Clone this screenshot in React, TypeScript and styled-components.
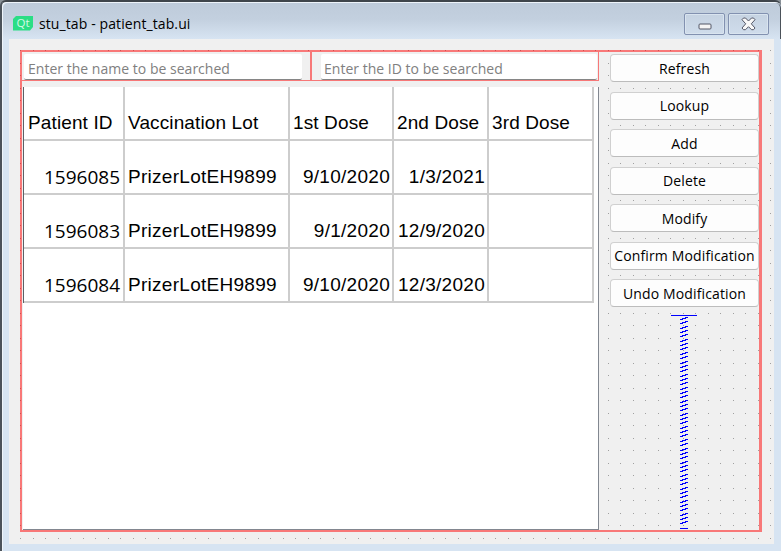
import React from "react";
import styled, { createGlobalStyle } from "styled-components";

const Global = createGlobalStyle`
  *{box-sizing:border-box}
  body{margin:0;overflow:hidden;background:#8a9299;font-family:"Open Sans","Noto Sans",sans-serif}
`;

const dotTile =
  "<svg xmlns='http://www.w3.org/2000/svg' width='25' height='25' shape-rendering='crispEdges'><path fill='#a0a0a0' d='M12 12h1v1h-1zM24 12h1v1h-1zM12 24h1v1h-1zM24 24h1v1h-1z'/></svg>";
const dots = `url("data:image/svg+xml,${encodeURIComponent(dotTile).replace(/'/g, "%27")}")`;
const guide = "rgba(255,0,0,.5)";

const Window = styled.main`
  width: 781px;
  height: 551px;
  display: flex;
  flex-direction: column;
  background: #d7e4f2;
  border-left: 2px solid #4b525a;
  border-top: 2px solid #3f454b;
  border-radius: 6px 6px 0 0;
  box-shadow: inset 1px 1px 0 #eef4fa;
`;
const TitleBar = styled.header`
  height: 36px;
  margin: 1px 0 0 1px;
  padding: 0 11px 0 10px;
  display: flex;
  align-items: center;
  border-right: 1px solid #4b525a;
  border-radius: 5px 5px 0 0;
  background: linear-gradient(#becbda, #c3d0df 45%, #d7e4f2);
`;
const Title = styled.h1`
  margin: 6px auto 0 6px;
  font-size: 14px;
  line-height: 20px;
  font-weight: 400;
  letter-spacing: 0.1px;
  color: #000;
  white-space: nowrap;
`;
const Logo = styled.svg`
  margin-top: 5px;
  overflow: visible;
`;
const WindowButton = styled.button`
  width: 41px;
  height: 22px;
  margin: 6px 0 0 3px;
  padding: 0;
  display: grid;
  place-items: center;
  border: 1px solid #8291b0;
  border-radius: 2px;
  background: linear-gradient(#c5d2e1, #cfdceb);
  box-shadow: inset 0 0 0 1px #d9e4ef;
`;
const Form = styled.section`
  width: 765px;
  height: 505px;
  margin-left: 7px;
  padding: 11px;
  background: #f0f0f0 ${dots} -13px -13px;
`;
const Layout = styled.div`
  width: 742px;
  height: 482px;
  display: flex;
  border: solid ${guide};
  border-width: 2px 3px 2px 2px;
`;
const Left = styled.div`
  width: 577px;
  display: flex;
  flex-direction: column;
`;
const SearchRow = styled.div`
  height: 29px;
  display: flex;
  background: #f0f0f0;
  border-bottom: 1px solid #f77878;
  border-right: 1px solid #f77878;
`;
const Search = styled.input<{ $w: number; $gap?: number; $inset: number }>`
  width: ${(p) => p.$w}px;
  height: 26px;
  flex: none;
  margin: 2px 0 0 ${(p) => p.$gap ?? 0}px;
  padding: 3px 4px 0 ${(p) => p.$inset}px;
  border: 0;
  border-bottom: 1px solid #868686;
  border-radius: 2px;
  background: #fff;
  font: 14px "Open Sans", sans-serif;
  letter-spacing: 0.02px;
  &::placeholder { color: #808080; opacity: 1; }
`;
const Divider = styled.i`
  width: 2px;
  margin-left: 8px;
  background: #f77878;
`;
const TableView = styled.div`
  flex: 1;
  margin: 6px 0 0 1px;
  border: solid #828790;
  border-width: 0 1px 1px 0;
  background: #fff;
`;
const Table = styled.table`
  width: 571px;
  table-layout: fixed;
  border-collapse: separate;
  border-spacing: 0;
  border-left: 1px solid #5c6066;
  font: 19px "Liberation Sans", Arial, sans-serif;
`;
const Cell = styled.td<{ $kind: "header" | "id" | "lot" | "date" }>`
  height: 54px;
  padding: 0 2px 5px 3px;
  border: solid #cdcdcd;
  border-width: 0 2px 2px 0;
  vertical-align: bottom;
  line-height: 22px;
  white-space: nowrap;
  letter-spacing: ${(p) => (p.$kind === "header" ? 0.12 : 0.28)}px;
  text-align: ${(p) => (p.$kind === "id" || p.$kind === "date" ? "right" : "left")};
  ${(p) => p.$kind === "id" && 'font-family: "Open Sans", sans-serif; letter-spacing: 0; padding-right: 3px;'}
  &:first-child { padding-left: 4px; }
`;
const Actions = styled.aside`
  width: 160px;
  padding: 2px 0 0 11px;
  display: flex;
  flex-direction: column;
`;
const ActionButton = styled.button`
  width: 149px;
  height: 28px;
  margin-bottom: 9.5px;
  padding: 0;
  flex: none;
  border: 1px solid #d0d0d0;
  border-bottom-color: #bcbcbc;
  border-radius: 4px;
  background: #fdfdfd;
  color: #000;
  font: 14px "Open Sans", sans-serif;
  letter-spacing: 0.14px;
  white-space: nowrap;
`;
const SpringIcon = styled.svg`
  margin: -2px 0 0 61px;
  flex: none;
`;

const QtLogo = () => (
  <Logo width="20" height="15" viewBox="0 0 20 15">
    <path fill="#2bde85" d="M3 0H20V11L17 14.5H0V3Z" />
    <text x="3.5" y="11" fontFamily="Open Sans" fontSize="11.5" fill="#d5f8e5">Qt</text>
  </Logo>
);

const Spring = () => {
  const coils = [];
  for (let i = 0; i < 48; i++) {
    const y = 2 + Math.round(i * 4.35);
    coils.push(`M9 ${y + 2}h3M11 ${y + 1}h4M14 ${y}h3`);
  }
  return (
    <SpringIcon width="26" height="215" viewBox="0 0 26 215" shapeRendering="crispEdges">
      <path d="M0 .5H26M9 213.5h8" stroke="#0000ff" />
      <path transform="translate(0 .5)" d={coils.join("")} fill="none" stroke="#0000ff" />
    </SpringIcon>
  );
};

const headers = ["Patient ID", "Vaccination Lot", "1st Dose", "2nd Dose", "3rd Dose"];
const rows = [
  ["1596085", "PrizerLotEH9899", "9/10/2020", "1/3/2021", ""],
  ["1596083", "PrizerLotEH9899", "9/1/2020", "12/9/2020", ""],
  ["1596084", "PrizerLotEH9899", "9/10/2020", "12/3/2020", ""],
];
const kinds = ["id", "lot", "date", "date", "date"] as const;
const widths = [101, 165, 104, 95, 105];
const actions = ["Refresh", "Lookup", "Add", "Delete", "Modify", "Confirm Modification", "Undo Modification"];

export default function App() {
  return (
    <>
      <Global />
      <Window>
        <TitleBar>
          <QtLogo />
          <Title>stu_tab - patient_tab.ui</Title>
          <WindowButton aria-label="Minimize">
            <svg width="14" height="14"><rect x="1" y="7" width="12" height="5" rx="1" fill="#f5f5f5" stroke="#535666" /></svg>
          </WindowButton>
          <WindowButton aria-label="Close">
            <svg width="15" height="14" viewBox="0 0 15 14">
              <path d="M2.5 1H4.5L7.5 4L10.5 1H12.5L14 2.7L10.3 6.8L14 11L12.5 12.7H10.5L7.5 9.7L4.5 12.7H2.5L1 11L4.7 6.8L1 2.7Z" fill="#f8f8f8" stroke="#535666" strokeLinejoin="round" />
            </svg>
          </WindowButton>
        </TitleBar>
        <Form>
          <Layout>
            <Left>
              <SearchRow>
                <Search $w={278} $gap={2} $inset={4} placeholder="Enter the name to be searched" />
                <Divider />
                <Search $w={276} $gap={9} $inset={3} placeholder="Enter the ID to be searched" />
              </SearchRow>
              <TableView>
                <Table>
                  <colgroup>{widths.map((w, i) => <col key={i} style={{ width: w }} />)}</colgroup>
                  <tbody>
                    <tr>{headers.map((h) => <Cell key={h} $kind="header">{h}</Cell>)}</tr>
                    {rows.map((r) => (
                      <tr key={r[0]}>
                        {r.map((c, i) => <Cell key={i} $kind={kinds[i]}>{c}</Cell>)}
                      </tr>
                    ))}
                  </tbody>
                </Table>
              </TableView>
            </Left>
            <Actions>
              {actions.map((a) => <ActionButton key={a}>{a}</ActionButton>)}
              <Spring />
            </Actions>
          </Layout>
        </Form>
      </Window>
    </>
  );
}
